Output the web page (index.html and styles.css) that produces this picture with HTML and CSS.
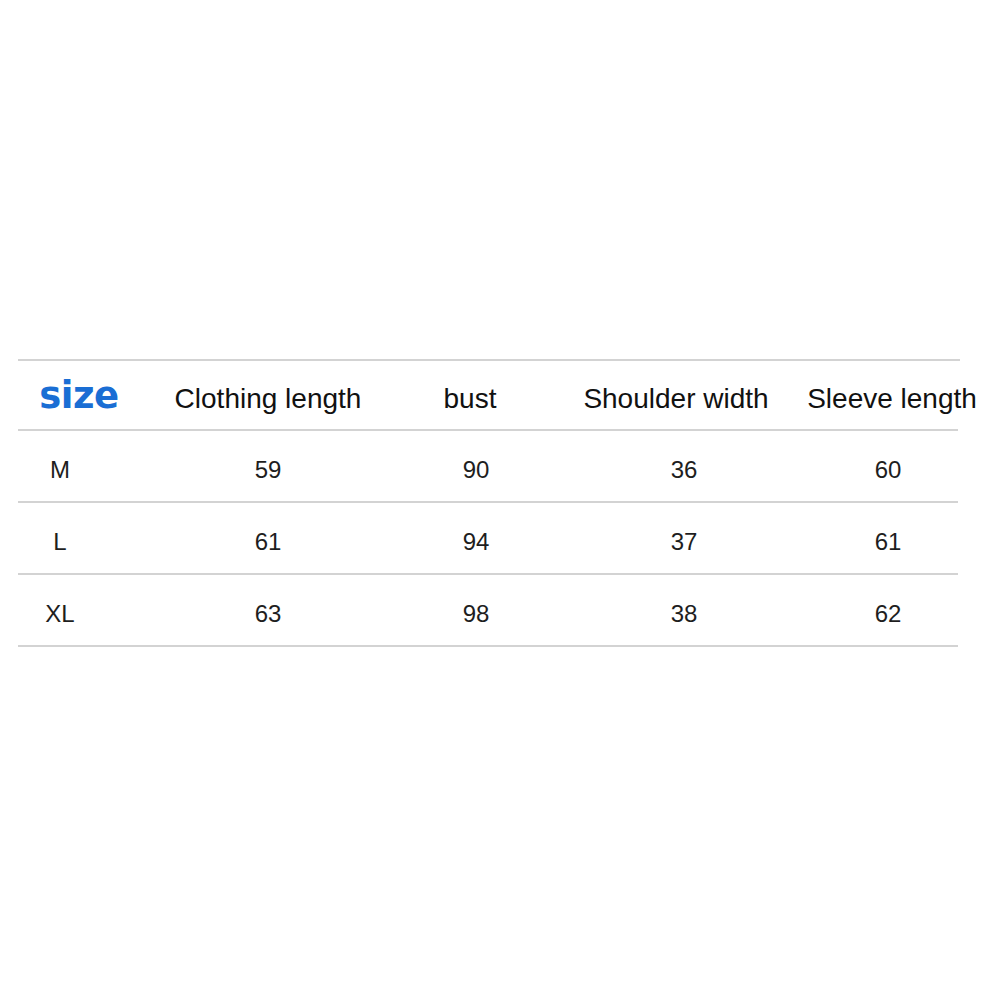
FILE: index.html
```html
<!DOCTYPE html>
<html>
<head>
<meta charset="utf-8">
<link rel="stylesheet" href="styles.css">
</head>
<body>
<div class="table">
  <div class="row head">
    <div class="cell first size-cell"><span class="size">size</span></div>
    <div class="cell">Clothing length</div>
    <div class="cell shift-bust">bust</div>
    <div class="cell shift-shoulder">Shoulder width</div>
    <div class="cell">Sleeve length</div>
  </div>
  <div class="row data">
    <div class="cell first">M</div>
    <div class="cell">59</div>
    <div class="cell">90</div>
    <div class="cell">36</div>
    <div class="cell last">60</div>
  </div>
  <div class="row data">
    <div class="cell first">L</div>
    <div class="cell">61</div>
    <div class="cell">94</div>
    <div class="cell">37</div>
    <div class="cell last">61</div>
  </div>
  <div class="row data">
    <div class="cell first">XL</div>
    <div class="cell">63</div>
    <div class="cell">98</div>
    <div class="cell">38</div>
    <div class="cell last">62</div>
  </div>
</div>
</body>
</html>
```
FILE: styles.css
```css
html, body {
  margin: 0;
  background: #ffffff;
}
body {
  padding: 359px 0 0 18px;
  font-family: "Liberation Sans", Arial, sans-serif;
  color: #111111;
}
.table {
  width: 942px;
  border-top: 2px solid #d3d3d3;
}
.row {
  display: grid;
  grid-template-columns: 146px repeat(4, 208px);
  border-bottom: 2px solid #d3d3d3;
  width: 940px;
  box-sizing: border-box;
}
.head {
  height: 70px;
  font-size: 28px;
  padding-top: 7px;
}
.data {
  height: 72px;
  font-size: 24px;
  color: #1e1e1e;
  padding-top: 8px;
}
.cell {
  display: flex;
  align-items: center;
  justify-content: center;
  white-space: nowrap;
}
.first {
  padding-right: 62px;
}
.last {
  padding-right: 8px;
}
.size-cell {
  padding-right: 24px;
  padding-bottom: 6px;
}
.size {
  font-family: "DejaVu Sans", sans-serif;
  font-weight: bold;
  font-size: 37px;
  letter-spacing: -0.5px;
  color: #1a6ed4;
}
.shift-bust {
  padding-right: 12px;
}
.shift-shoulder {
  padding-right: 16px;
}
```
